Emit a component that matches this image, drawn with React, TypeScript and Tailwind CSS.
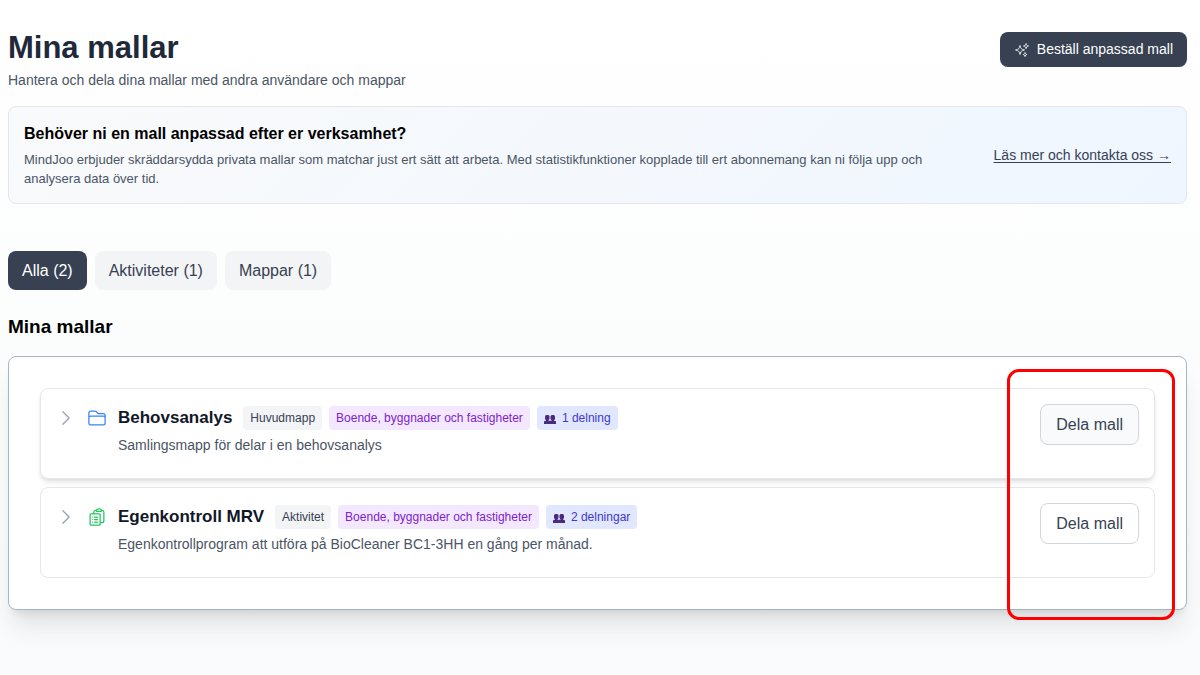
import { useState } from 'react'
import {
    HiOutlineChevronRight,
    HiOutlineClipboardDocumentList,
    HiOutlineFolder,
    HiOutlineSparkles
} from 'react-icons/hi2'

interface Template {
    name: string
    description: string
    kind: 'folder' | 'activity'
    category: string
    shares: string
    active: boolean
}

const templates: Template[] = [
    {
        name: 'Behovsanalys',
        description: 'Samlingsmapp för delar i en behovsanalys',
        kind: 'folder',
        category: 'Boende, byggnader och fastigheter',
        shares: '1 delning',
        active: true
    },
    {
        name: 'Egenkontroll MRV',
        description: 'Egenkontrollprogram att utföra på BioCleaner BC1-3HH en gång per månad.',
        kind: 'activity',
        category: 'Boende, byggnader och fastigheter',
        shares: '2 delningar',
        active: false
    }
]

const filters = [
    { id: 'all', label: 'Alla (2)' },
    { id: 'activity', label: 'Aktiviteter (1)' },
    { id: 'folder', label: 'Mappar (1)' }
]

function PeopleIcon() {
    return (
        <svg viewBox="0 0 24 18" className="mt-[2px] h-[9px] w-3 shrink-0" fill="#4a2a7a" aria-hidden="true">
            <rect x="2" y="0" width="9" height="10" rx="3" />
            <rect x="13" y="0" width="9" height="10" rx="3" />
            <path d="M4 8h5v5h-5zM15 8h5v5h-5z" />
            <path d="M0 18v-4Q0 11.5 3 11.5h18q3 0 3 2.5V18z" />
        </svg>
    )
}

function TemplateRow({ template }: { template: Template }) {
    const isFolder = template.kind === 'folder'

    return (
        <li className={`flex min-h-[91px] items-start justify-between rounded-lg border border-gray-200 bg-white p-[15px] ${template.active ? 'shadow-md' : ''}`}>
            <div className="flex items-start">
                <button type="button" aria-label={`Visa ${template.name}`} className="mt-1 mr-[11px] text-gray-400">
                    <HiOutlineChevronRight className="size-5" />
                </button>
                {isFolder ? (
                    <HiOutlineFolder className="mt-1 mr-[11px] size-5 text-[#3b82f6]" />
                ) : (
                    <HiOutlineClipboardDocumentList className="mt-1 mr-[11px] size-5 text-[#22c55e]" />
                )}
                <div>
                    <div className="flex items-center gap-[7px]">
                        <h3 className="mr-1 text-[17px] leading-7 font-semibold text-gray-900">{template.name}</h3>
                        <span className="rounded bg-gray-100 px-[7px] py-1 text-[12px] leading-4 text-gray-700">
                            {isFolder ? 'Huvudmapp' : 'Aktivitet'}
                        </span>
                        <span className="rounded bg-[#f3e8ff] px-[7px] py-1 text-[12px] leading-4 text-[#7e22ce]">
                            {template.category}
                        </span>
                        <span className="flex items-center gap-[6px] rounded bg-[#e0e7ff] px-[7px] py-1 text-[12px] leading-4 text-[#4338ca]">
                            <PeopleIcon />
                            {template.shares}
                        </span>
                    </div>
                    <p className="mt-[3px] text-[14px] leading-5 text-gray-600">{template.description}</p>
                </div>
            </div>
            <button
                type="button"
                className={`rounded-lg border border-gray-300 px-[15px] py-2 text-[16px] leading-[23px] text-gray-700 ${template.active ? 'bg-gray-50' : 'bg-white'}`}
            >
                Dela mall
            </button>
        </li>
    )
}

export default function App() {
    const [filter, setFilter] = useState('all')
    const visible = templates.filter(t => filter === 'all' || t.kind === filter)

    return (
        <main className="min-h-screen bg-linear-to-b from-white to-gray-50 pt-7 pr-[13px] pb-16 pl-2 font-['Liberation_Sans',Arial,sans-serif]">
            <header className="flex items-start justify-between">
                <div>
                    <h1 className="text-[31px] leading-10 font-bold text-gray-800">Mina mallar</h1>
                    <p className="mt-[2px] text-[14px] leading-5 text-gray-600">
                        Hantera och dela dina mallar med andra användare och mappar
                    </p>
                </div>
                <button type="button" className="mt-1 flex items-center gap-[7px] rounded-lg bg-[#374151] px-[14px] py-2 text-[14px] leading-[19px] font-medium text-white">
                    <HiOutlineSparkles className="size-4 text-gray-200" />
                    Beställ anpassad mall
                </button>
            </header>

            <section className="mt-4 flex items-center justify-between rounded-lg border border-gray-200 bg-linear-135 from-[#f9fafb] to-[#eff6ff] p-[15px]">
                <div className="max-w-[950px]">
                    <h2 className="text-[16px] leading-6 font-semibold text-black">
                        Behöver ni en mall anpassad efter er verksamhet?
                    </h2>
                    <p className="mt-1 text-[13px] leading-[19px] text-gray-600">
                        MindJoo erbjuder skräddarsydda privata mallar som matchar just ert sätt att arbeta. Med
                        statistikfunktioner kopplade till ert abonnemang kan ni följa upp och analysera data över tid.
                    </p>
                </div>
                <a href="#kontakt" className="text-[14px] leading-5 whitespace-nowrap text-gray-700 underline underline-offset-2">
                    Läs mer och kontakta oss →
                </a>
            </section>

            <nav className="mt-[47px] flex gap-2">
                {filters.map(f => (
                    <button
                        key={f.id}
                        type="button"
                        onClick={() => setFilter(f.id)}
                        className={`rounded-lg px-[14px] py-2 text-[16px] leading-[23px] ${filter === f.id ? 'bg-[#374151] text-white' : 'bg-gray-100 text-gray-700'}`}
                    >
                        {f.label}
                    </button>
                ))}
            </nav>

            <h2 className="mt-[23px] text-[19px] leading-7 font-semibold text-black">Mina mallar</h2>

            <div className="relative mt-[15px] rounded-lg border border-[#a3b6c2] bg-white p-[31px] shadow-xl">
                <ul className="flex flex-col gap-2">
                    {visible.map(t => (
                        <TemplateRow key={t.name} template={t} />
                    ))}
                </ul>
                {/* highlight around the share buttons */}
                <div className="pointer-events-none absolute top-3 right-[11px] -bottom-[11px] w-[168px] rounded-xl border-[3px] border-[#ff0000]" />
            </div>
        </main>
    )
}
